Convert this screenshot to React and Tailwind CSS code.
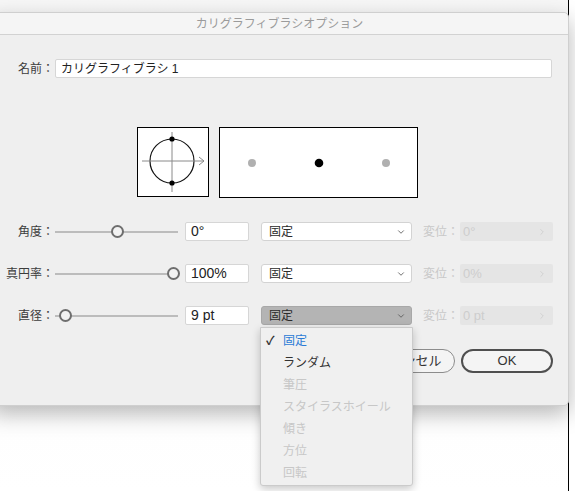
import React from 'react';
import { ChevronDown, ChevronRight } from 'lucide-react';

const rows = [
  { label: '角度：', knob: 62, value: '0°', offset: '0°', active: false },
  { label: '真円率：', knob: 118, value: '100%', offset: '0%', active: false },
  { label: '直径：', knob: 10, value: '9 pt', offset: '0 pt', active: true },
];

const menuItems = [
  { text: '固定', checked: true },
  { text: 'ランダム' },
  { text: '筆圧', disabled: true },
  { text: 'スタイラスホイール', disabled: true },
  { text: '傾き', disabled: true },
  { text: '方位', disabled: true },
  { text: '回転', disabled: true },
];

const Slider = ({ pos }) => (
  <div className="relative w-[123px] h-[19px] flex items-center">
    <div className="w-full h-[2px] bg-[#bcbcbc]" />
    <div
      className="absolute top-[3px] w-[13px] h-[13px] rounded-full border-2 border-[#6e6e6e] bg-[#f2f2f2]"
      style={{ left: pos - 6 }}
    />
  </div>
);

const Row = ({ row }) => (
  <div className="flex items-center h-[19px]">
    <div className="w-[55px] text-right text-[12px] text-[#3c3c3c] pr-[1px] whitespace-nowrap">{row.label}</div>
    <Slider pos={row.knob} />
    <div className="ml-[7px] w-[64px] h-[19px] bg-white border border-[#d6d6d6] rounded-[2px] flex items-center pl-[5px] text-[14px] text-[#222]">
      {row.value}
    </div>
    <div
      className={
        row.active
          ? 'ml-[12px] w-[151px] h-[19px] rounded-[3px] bg-[#b4b4b4] border border-[#a8a8a8] flex items-center justify-between pl-[7px] pr-[5px] text-[12px] text-[#2a2a2a]'
          : 'ml-[12px] w-[151px] h-[19px] rounded-[3px] bg-white border border-[#d3d3d3] flex items-center justify-between pl-[7px] pr-[5px] text-[12px] text-[#2a2a2a]'
      }
    >
      <span>固定</span>
      <ChevronDown size={10} strokeWidth={2} className="text-[#555]" />
    </div>
    <div className="ml-[11px] w-[37px] text-[12px] text-[#c8c8c8] whitespace-nowrap">変位：</div>
    <div className="w-[93px] h-[19px] bg-[#e5e5e5] rounded-[2px] flex items-center justify-between pl-[3px] pr-[6px] text-[13px] text-[#cdcdcd]">
      <span>{row.offset}</span>
      <ChevronRight size={10} strokeWidth={1.5} className="text-[#c4c4c4]" />
    </div>
  </div>
);

export default function App() {
  return (
    <div className="relative w-[575px] h-[491px] bg-white overflow-hidden font-['Liberation_Sans','Noto_Sans_CJK_JP',sans-serif]">
      <div className="w-[569px] h-[491px] border-r border-black bg-gradient-to-b from-[#f7f7f7] to-white">
        {/* dialog */}
        <div className="relative top-[12px] -ml-[10px] w-[579px] h-[394px] bg-[#efefef] rounded-[5px] shadow-[0_8px_22px_rgba(0,0,0,0.28)] border border-[#cfcfcf]">
          <div className="h-[22px] bg-[#f5f5f5] border-b border-[#d2d2d2] rounded-t-[5px] flex items-center justify-center text-[12px] text-[#9b9b9b]">
            カリグラフィブラシオプション
          </div>

          <div className="pl-[9px]">
            {/* name */}
            <div className="flex items-center mt-[24px] h-[19px]">
              <div className="w-[55px] text-right text-[12px] text-[#3c3c3c] pr-[1px]">名前：</div>
              <div className="w-[497px] h-[19px] bg-white border border-[#d6d6d6] rounded-[2px] flex items-center pl-[5px] text-[12px] text-[#222]">
                カリグラフィブラシ 1
              </div>
            </div>

            {/* preview */}
            <div className="flex mt-[49px] ml-[137px] gap-[10px]">
              <div className="w-[72px] h-[70px] bg-white border border-black">
                <svg width="70" height="68" viewBox="0 0 70 68">
                  <circle cx="34" cy="33" r="22" fill="none" stroke="#111" strokeWidth="1.2" />
                  <line x1="4" y1="33" x2="66" y2="33" stroke="#8a8a8a" strokeWidth="1" />
                  <polyline points="61,29 66,33 61,37" fill="none" stroke="#8a8a8a" strokeWidth="1" />
                  <line x1="34" y1="4" x2="34" y2="64" stroke="#8a8a8a" strokeWidth="1" />
                  <circle cx="34" cy="11" r="2.6" fill="#000" />
                  <circle cx="34" cy="55" r="2.6" fill="#000" />
                </svg>
              </div>
              <div className="w-[199px] h-[71px] bg-white border border-black">
                <svg width="197" height="69" viewBox="0 0 197 69">
                  <circle cx="32" cy="35" r="4" fill="#b0b0b0" />
                  <circle cx="99" cy="35" r="4.3" fill="#000" />
                  <circle cx="166" cy="35" r="4" fill="#b0b0b0" />
                </svg>
              </div>
            </div>

            {/* rows */}
            <div className="flex flex-col gap-[23px] mt-[24px]">
              {rows.map((r, i) => <Row key={i} row={r} />)}
            </div>

            {/* buttons */}
            <div className="flex justify-end gap-[6px] mt-[24px] pr-[15px]">
              <div className="w-[92px] h-[24px] rounded-full border border-[#8c8c8c] bg-[#f4f4f4] flex items-center justify-center text-[13px] text-[#333]">
                キャンセル
              </div>
              <div className="w-[92px] h-[24px] rounded-full border-2 border-[#4f4f4f] bg-[#f4f4f4] flex items-center justify-center text-[13px] text-[#333]">
                OK
              </div>
            </div>
          </div>
        </div>
      </div>

      {/* dropdown menu */}
      <div className="absolute left-[260px] top-[327px] w-[153px] pt-[2px] pb-[1px] bg-[#f0f0f0] border border-[#cbcbcb] rounded-b-[3px] shadow-[0_3px_8px_rgba(0,0,0,0.22)]">
        {menuItems.map((m, i) => (
          <div key={i} className="flex items-center h-[22px] text-[12px]">
            <span className="w-[22px] pl-[5px] text-[12px] font-bold text-[#333]">{m.checked ? '✓' : ''}</span>
            <span className={m.checked ? 'text-[#2b7bd6]' : m.disabled ? 'text-[#c7c7c7]' : 'text-[#333]'}>
              {m.text}
            </span>
          </div>
        ))}
      </div>
    </div>
  );
}
